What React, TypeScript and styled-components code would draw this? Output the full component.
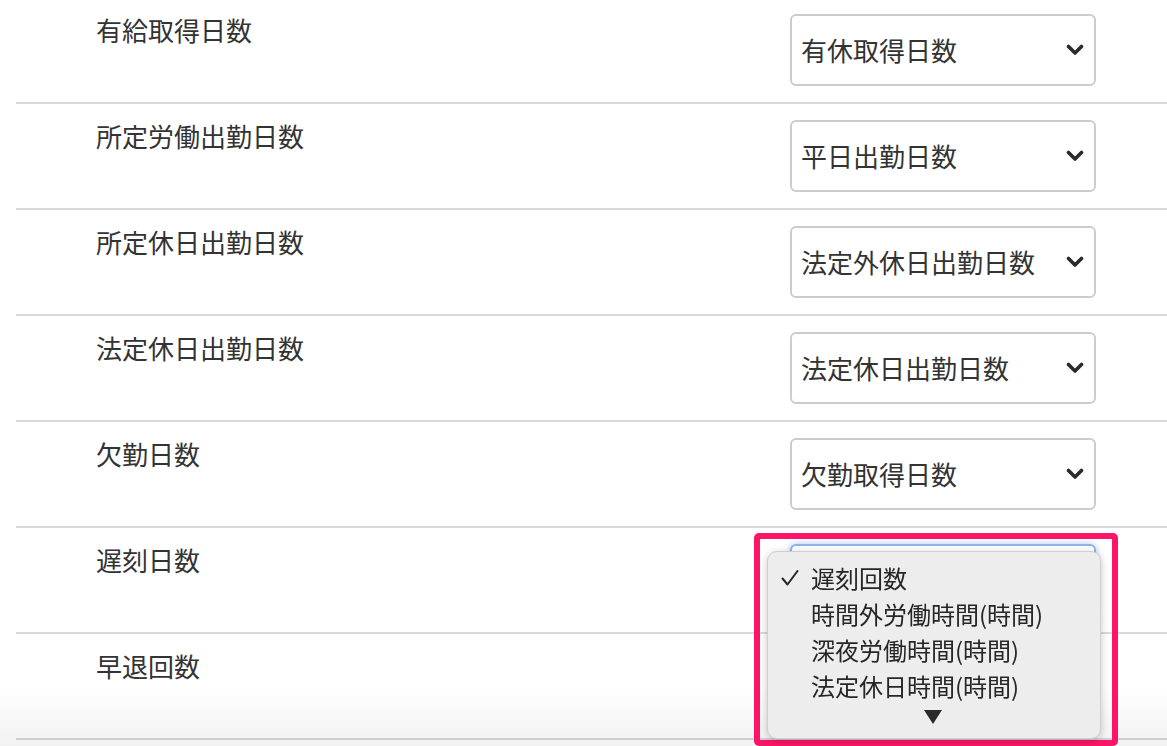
import React from 'react';
import styled, { createGlobalStyle } from 'styled-components';

const GlobalStyle = createGlobalStyle`
  html, body {
    margin: 0;
    padding: 0;
    background: #ffffff;
    overflow: hidden;
  }
  body {
    font-family: "Noto Sans CJK JP", "Noto Sans", sans-serif;
    color: #333333;
  }
`;

interface MappingRow {
  label: string;
  value: string;
  focused?: boolean;
}

const ROWS: MappingRow[] = [
  { label: '有給取得日数', value: '有休取得日数' },
  { label: '所定労働出勤日数', value: '平日出勤日数' },
  { label: '所定休日出勤日数', value: '法定外休日出勤日数' },
  { label: '法定休日出勤日数', value: '法定休日出勤日数' },
  { label: '欠勤日数', value: '欠勤取得日数' },
  { label: '遅刻日数', value: '遅刻回数', focused: true },
  { label: '早退回数', value: '早退回数' },
];

const MENU_ITEMS = ['遅刻回数', '時間外労働時間(時間)', '深夜労働時間(時間)', '法定休日時間(時間)'];

function Chevron() {
  return (
    <svg width="18" height="12" viewBox="0 0 18 12">
      <polyline
        points="2.5,2.5 9,9 15.5,2.5"
        fill="none"
        stroke="#2a2a2a"
        strokeWidth="3.6"
        strokeLinecap="round"
        strokeLinejoin="round"
      />
    </svg>
  );
}

function CheckMark() {
  return (
    <svg width="18" height="18" viewBox="0 0 18 18">
      <polyline
        points="1.5,9.5 6.5,15.5 16.5,2"
        fill="none"
        stroke="#262626"
        strokeWidth="2"
        strokeLinecap="round"
        strokeLinejoin="round"
      />
    </svg>
  );
}

export default function App() {
  return (
    <>
      <GlobalStyle />
      <Page>
        {ROWS.map((row) => (
          <Row key={row.label}>
            <Label>{row.label}</Label>
            <SelectBox $focused={row.focused}>
              <SelectText>{row.value}</SelectText>
              <Chevron />
            </SelectBox>
          </Row>
        ))}
      </Page>
      <BottomFade />
      <Highlight />
      <Menu>
        {MENU_ITEMS.map((item, i) => (
          <MenuItem key={item}>
            <Check>{i === 0 && <CheckMark />}</Check>
            <span>{item}</span>
          </MenuItem>
        ))}
        <ScrollArrow>
          <svg width="18" height="14" viewBox="0 0 18 14">
            <polygon points="0,0 18,0 9,14" fill="#2b2b2b" />
          </svg>
        </ScrollArrow>
      </Menu>
    </>
  );
}

const Page = styled.div`
  margin-top: -2px;
`;

const Row = styled.div`
  display: flex;
  align-items: flex-start;
  justify-content: space-between;
  height: 104px;
  margin-left: 16px;
  padding-left: 80px;
  padding-right: 71px;
  border-bottom: 2px solid #dadada;
`;

const Label = styled.div`
  margin-top: 14px;
  font-size: 26px;
  line-height: 36px;
  color: #333333;
`;

const SelectBox = styled.div<{ $focused?: boolean }>`
  box-sizing: border-box;
  display: flex;
  align-items: center;
  justify-content: space-between;
  width: 306px;
  height: 72px;
  margin-top: 16px;
  padding: 0 10px 0 9px;
  border: 2px solid ${(p) => (p.$focused ? '#8fb4e6' : '#cccccc')};
  border-radius: 6px;
  background: #ffffff;
  box-shadow: ${(p) => (p.$focused ? '0 0 6px rgba(90, 150, 230, 0.55)' : 'none')};
`;

const SelectText = styled.span`
  font-size: 26px;
  line-height: 36px;
  color: #333333;
  white-space: nowrap;
`;

const BottomFade = styled.div`
  position: fixed;
  left: 0;
  right: 0;
  bottom: 0;
  height: 60px;
  background: linear-gradient(rgba(0, 0, 0, 0), rgba(0, 0, 0, 0.05));
  pointer-events: none;
`;

const Highlight = styled.div`
  position: absolute;
  left: 754px;
  top: 533px;
  width: 364px;
  height: 213px;
  box-sizing: border-box;
  border: 6px solid #fb1566;
  border-radius: 5px;
  pointer-events: none;
`;

const Menu = styled.div`
  position: absolute;
  left: 767px;
  top: 551px;
  width: 334px;
  height: 188px;
  box-sizing: border-box;
  padding-top: 8px;
  background: #ededed;
  border: 1px solid #cfcfcf;
  border-radius: 10px;
  box-shadow: 0 2px 8px rgba(0, 0, 0, 0.22);
  color: #262626;
`;

const MenuItem = styled.div`
  display: flex;
  align-items: center;
  height: 36px;
  padding-left: 13px;
  font-size: 24px;
  line-height: 36px;
  white-space: nowrap;
`;

const Check = styled.span`
  display: flex;
  align-items: center;
  width: 30px;
`;

const ScrollArrow = styled.div`
  display: flex;
  justify-content: center;
  padding-top: 6px;
  padding-right: 2px;
`;
